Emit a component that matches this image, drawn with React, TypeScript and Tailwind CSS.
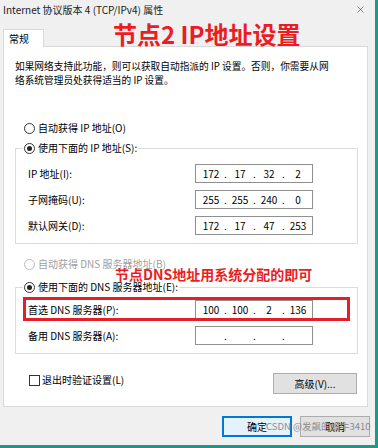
import { X } from 'lucide-react'

const font = "font-['Noto_Sans_CJK_SC',sans-serif]"

function Radio({ checked, disabled }: { checked?: boolean; disabled?: boolean }) {
  return (
    <span
      className={
        disabled
          ? 'flex h-[11px] w-[11px] shrink-0 items-center justify-center rounded-full border border-[#bcbcbc] bg-white'
          : 'flex h-[11px] w-[11px] shrink-0 items-center justify-center rounded-full border border-[#333] bg-white'
      }
    >
      {checked && <span className="h-[5px] w-[5px] rounded-full bg-[#222]" />}
    </span>
  )
}

function IpBox({ parts }: { parts: string[] }) {
  return (
    <div className="flex h-[19px] w-[118px] items-center border border-[#8f8f8f] bg-white pl-[2px] text-[10px] leading-[17px] text-black">
      {parts.map((p, i) => (
        <div key={i} className="flex items-center">
          {i > 0 && <span className="w-[3px] text-center">.</span>}
          <span className="w-[26px] text-center">{p}</span>
        </div>
      ))}
    </div>
  )
}

function Row({ label, parts }: { label: string; parts: string[] }) {
  return (
    <div className="flex h-[19px] items-center">
      <span className="w-[179px] shrink-0 pl-[12px] text-[10px] leading-[14px]">{label}</span>
      <IpBox parts={parts} />
    </div>
  )
}

export default function App() {
  return (
    <div
      className={`relative h-[448px] w-[378px] overflow-hidden border-r-[3px] border-b-[3px] border-[#1b9a87] bg-[#f0f0f0] text-black ${font}`}
    >
      {/* title bar */}
      <div className="flex h-[19px] items-center justify-between pl-[3px] pr-[9px]">
        <span className="text-[10px] leading-[14px] text-[#1a1a1a]">Internet 协议版本 4 (TCP/IPv4) 属性</span>
        <X size={11} strokeWidth={1.2} className="text-[#222]" />
      </div>

      {/* tab */}
      <div className="mt-[10px] flex px-[3px]">
        <div className="-mb-px relative z-10 flex h-[18px] w-[41px] items-center border border-b-0 border-[#d9d9d9] bg-white pl-[5px] text-[10px] leading-[14px]">
          常规
        </div>
      </div>

      {/* panel */}
      <div className="mx-[3px] h-[361px] w-[365px] border border-[#d9d9d9] bg-white pt-[12px]">
        <p className="ml-[11px] text-[9.7px] leading-[14px]">
          如果网络支持此功能，则可以获取自动指派的 IP 设置。否则，你需要从网
          <br />
          络系统管理员处获得适当的 IP 设置。
        </p>

        <div className="mt-[34px] flex h-[14px] items-center gap-[3px] pl-[20px] text-[10px] leading-[14px]">
          <Radio />
          <span>自动获得 IP 地址(O)</span>
        </div>

        <fieldset className="mt-[6px] ml-[11px] w-[343px] border border-[#dcdcdc] pt-[9px] pb-[8px]">
          <legend className="ml-[7px] flex h-[14px] items-center gap-[3px] px-[1px] text-[10px] leading-[14px]">
            <Radio checked />
            <span>使用下面的 IP 地址(S):</span>
          </legend>
          <div className="flex flex-col gap-[7px]">
            <Row label="IP 地址(I):" parts={['172', '17', '32', '2']} />
            <Row label="子网掩码(U):" parts={['255', '255', '240', '0']} />
            <Row label="默认网关(D):" parts={['172', '17', '47', '253']} />
          </div>
        </fieldset>

        <div className="mt-[13px] flex h-[14px] items-center gap-[3px] pl-[20px] text-[10px] leading-[14px] text-[#a0a0a0]">
          <Radio disabled />
          <span>自动获得 DNS 服务器地址(B)</span>
        </div>

        <fieldset className="mt-[9px] ml-[11px] w-[343px] border border-[#dcdcdc] pt-[6px] pb-[8px]">
          <legend className="ml-[7px] flex h-[14px] items-center gap-[3px] px-[1px] text-[10px] leading-[14px]">
            <Radio checked />
            <span>使用下面的 DNS 服务器地址(E):</span>
          </legend>
          <div className="flex flex-col gap-[7px]">
            <Row label="首选 DNS 服务器(P):" parts={['100', '100', '2', '136']} />
            <Row label="备用 DNS 服务器(A):" parts={['', '', '', '']} />
          </div>
        </fieldset>

        <div className="mt-[19px] flex items-start justify-between pr-[10px] pl-[25px]">
          <div className="flex h-[14px] items-center gap-[2px] text-[10px] leading-[14px]">
            <span className="h-[11px] w-[11px] border border-[#333] bg-white" />
            <span>退出时验证设置(L)</span>
          </div>
          <button className="h-[21px] w-[84px] border border-[#adadad] bg-[#e1e1e1] text-[10px] leading-[14px]">
            高级(V)...
          </button>
        </div>
      </div>

      {/* dialog buttons */}
      <div className="mt-[9px] flex justify-end gap-[8px] pr-[5px]">
        <button className="h-[21px] w-[70px] border border-[#0078d7] bg-[#e5f1fb] text-[10px] leading-[14px] shadow-[inset_0_0_0_1px_#0078d7]">
          确定
        </button>
        <button className="h-[21px] w-[70px] border border-[#adadad] bg-[#e1e1e1] text-[10px] leading-[14px]">
          取消
        </button>
      </div>

      {/* annotations over the screenshot */}
      <div className="absolute top-[18px] left-[113px] text-[24px] leading-[32px] font-bold text-[#ec1c24]">
        节点2 IP地址设置
      </div>
      <div className="absolute top-[264px] left-[115px] text-[14px] leading-[20px] font-bold text-[#ec1c24]">
        节点DNS地址用系统分配的即可
      </div>
      <div className="absolute top-[297px] left-[23px] h-[24px] w-[327px] border-[3px] border-[#e3202a]" />
      <div className="absolute top-[419px] left-[266px] text-[9.5px] leading-[14px] text-[#8c8c8c]">
        CSDN @发飙的蜗牛3410
      </div>
    </div>
  )
}
